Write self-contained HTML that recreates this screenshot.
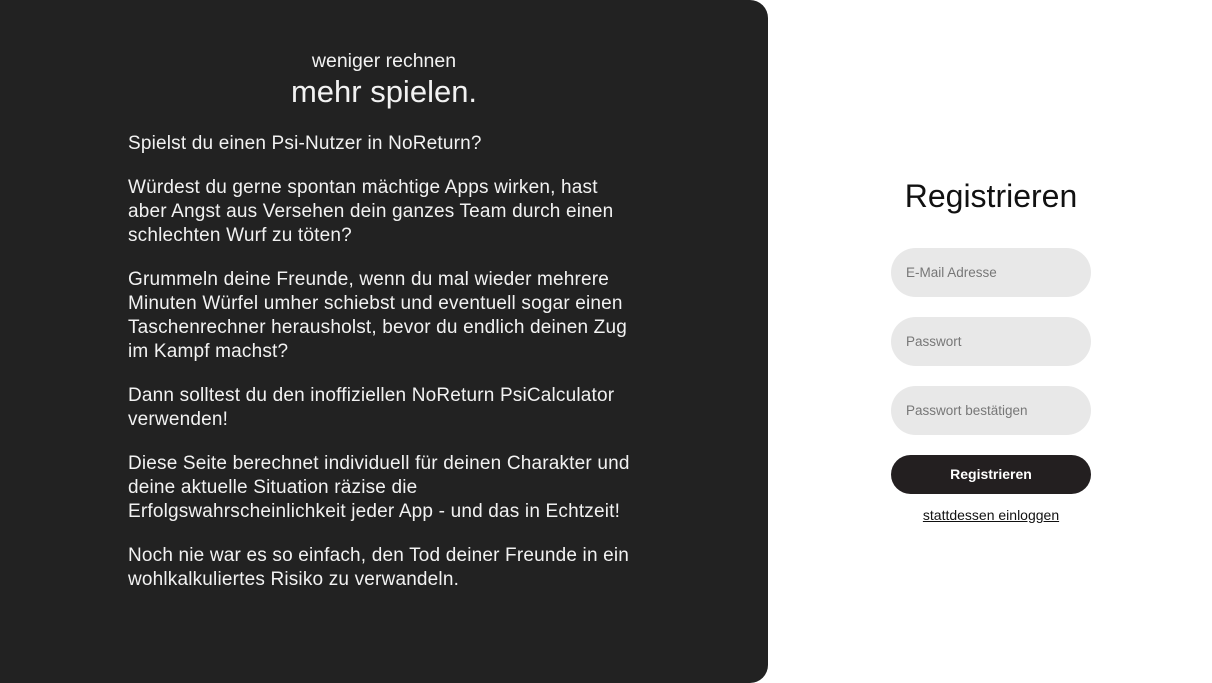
<!DOCTYPE html>
<html><head><meta charset="utf-8"><style>
*{margin:0;padding:0;box-sizing:border-box}
body{width:1212px;height:683px;background:#fff;font-family:"Liberation Sans",sans-serif;position:relative;overflow:hidden}
.left{position:absolute;left:0;top:0;width:768px;height:683px;background:#222;border-radius:0 18px 18px 0;color:#f2f2f2}
.t1{position:absolute;left:0;width:768px;text-align:center;top:50px;font-size:19.5px;font-weight:300}
.t2{position:absolute;left:0;width:768px;text-align:center;top:74px;font-size:31px;font-weight:300}
.txt{position:absolute;left:128px;top:132px;font-size:19px;letter-spacing:0.18px;line-height:24px;white-space:nowrap;font-weight:300}
.txt p{margin-bottom:20px}
.h{position:absolute;left:891px;width:200px;text-align:center;top:178px;font-size:32px;color:#111}
.in{position:absolute;left:891px;width:200px;height:49px;border-radius:25px;background:#e8e8e8;color:#777;font-size:13.5px;padding-left:15px;line-height:49px}
.btn{position:absolute;left:891px;top:455px;width:200px;height:39px;border-radius:20px;background:#231f20;color:#fff;font-weight:bold;font-size:14px;text-align:center;line-height:39px}
.lnk{position:absolute;left:891px;width:200px;top:507px;text-align:center;font-size:14px;color:#111;text-decoration:underline}
</style></head><body>
<div class="left">
<div class="t1">weniger rechnen</div>
<div class="t2">mehr spielen.</div>
<div class="txt">
<p>Spielst du einen Psi-Nutzer in NoReturn?</p>
<p>Würdest du gerne spontan mächtige Apps wirken, hast<br>aber Angst aus Versehen dein ganzes Team durch einen<br>schlechten Wurf zu töten?</p>
<p>Grummeln deine Freunde, wenn du mal wieder mehrere<br>Minuten Würfel umher schiebst und eventuell sogar einen<br>Taschenrechner herausholst, bevor du endlich deinen Zug<br>im Kampf machst?</p>
<p>Dann solltest du den inoffiziellen NoReturn PsiCalculator<br>verwenden!</p>
<p>Diese Seite berechnet individuell für deinen Charakter und<br>deine aktuelle Situation räzise die<br>Erfolgswahrscheinlichkeit jeder App - und das in Echtzeit!</p>
<p>Noch nie war es so einfach, den Tod deiner Freunde in ein<br>wohlkalkuliertes Risiko zu verwandeln.</p>
</div>
</div>
<div class="h">Registrieren</div>
<div class="in" style="top:248px">E-Mail Adresse</div>
<div class="in" style="top:317px">Passwort</div>
<div class="in" style="top:386px">Passwort bestätigen</div>
<div class="btn">Registrieren</div>
<div class="lnk">stattdessen einloggen</div>
</body></html>
